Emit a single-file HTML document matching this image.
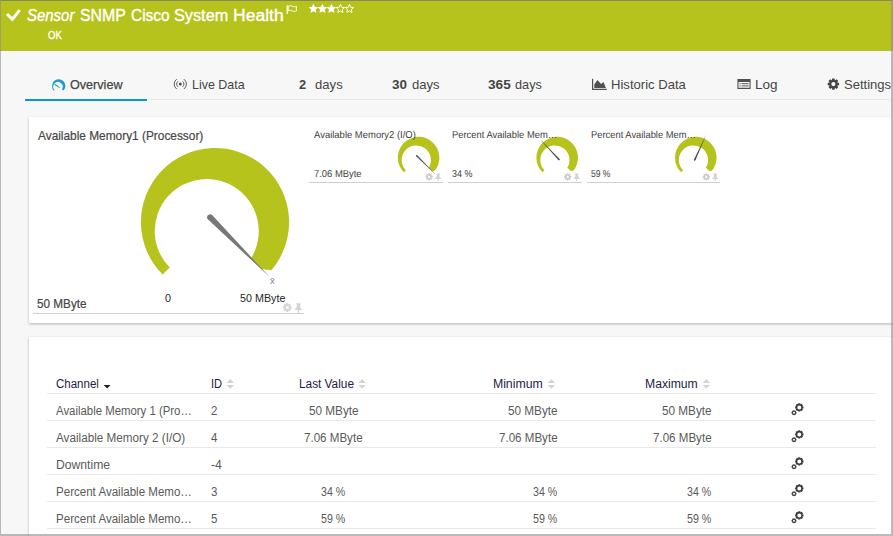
<!DOCTYPE html>
<html lang="en"><head><meta charset="utf-8"><title>Sensor SNMP Cisco System Health</title>
<style>
html,body{margin:0;padding:0}
body{width:893px;height:536px;overflow:hidden;background:#f7f7f7;font-family:"Liberation Sans",sans-serif;position:relative}
#frame{position:absolute;left:0;top:0;width:893px;height:536px;box-sizing:border-box;border-style:solid;border-color:rgba(118,118,118,.75) rgba(140,140,140,.6) rgba(140,140,140,.6) rgba(140,140,140,.6);border-width:1px 2px 2px 1px;z-index:10;pointer-events:none}
header{position:absolute;left:0;top:0;width:893px;height:51px;background:#b6c31c}
nav{position:absolute;left:0;top:51px;width:893px;height:49px}
nav .line{position:absolute;left:25px;top:48px;width:868px;height:1px;background:#e9e9e9}
nav .active{position:absolute;left:25px;top:48px;width:122px;height:2px;background:#0a97d9}
.card{position:absolute;background:#fff;box-shadow:0 1px 2.5px rgba(0,0,0,.28)}
#c1{left:29px;top:117px;width:880px;height:206px}
#c2{left:29px;top:337px;width:880px;height:220px}
.hl{position:absolute;height:1px;background:#cfcfcf}
.rl{position:absolute;left:47px;width:829px;height:1px;background:#e9e9e9}
.t{position:absolute;white-space:pre;line-height:20px;height:20px;transform-origin:0 0}
svg{position:absolute;left:0;top:0}
</style></head>
<body>
<header></header>
<nav><div class="line"></div><div class="active"></div></nav>
<section class="card" id="c1"></section>
<section class="card" id="c2"></section>
<div class="hl" style="left:33px;top:313px;width:271px"></div><div class="hl" style="left:309px;top:182px;width:134px"></div><div class="hl" style="left:448px;top:182px;width:133.5px"></div><div class="hl" style="left:586.5px;top:182px;width:133.5px"></div><div class="rl" style="top:393px"></div><div class="rl" style="top:420px"></div><div class="rl" style="top:447px"></div><div class="rl" style="top:474px"></div><div class="rl" style="top:501px"></div><div class="rl" style="top:528px"></div>
<svg width="893" height="536" viewBox="0 0 893 536">
<path d="M5.9 14.9L8.0 12.9L12.2 16.9L18.6 9.2L20.8 11.0L12.5 21.4Z" fill="#fff"/>
<path d="M287.2 5.2v8.8" stroke="#fff" stroke-width="1.2" fill="none"/>
<path d="M288.2 6.3c1.6 -0.8 2.8 -0.6 4.2 0c1.4 0.6 2.6 0.6 4 0v4.6c-1.4 0.6 -2.6 0.6 -4 0c-1.4 -0.6 -2.6 -0.8 -4.2 0z" stroke="#fff" stroke-width="1" fill="none"/>
<polygon points="313.40,3.70 314.81,6.86 318.25,7.22 315.68,9.54 316.40,12.93 313.40,11.20 310.40,12.93 311.12,9.54 308.55,7.22 311.99,6.86" fill="#fff"/>
<polygon points="322.40,3.70 323.81,6.86 327.25,7.22 324.68,9.54 325.40,12.93 322.40,11.20 319.40,12.93 320.12,9.54 317.55,7.22 320.99,6.86" fill="#fff"/>
<polygon points="331.40,3.70 332.81,6.86 336.25,7.22 333.68,9.54 334.40,12.93 331.40,11.20 328.40,12.93 329.12,9.54 326.55,7.22 329.99,6.86" fill="#fff"/>
<polygon points="340.40,4.50 341.58,7.28 344.58,7.54 342.30,9.52 342.99,12.46 340.40,10.90 337.81,12.46 338.50,9.52 336.22,7.54 339.22,7.28" fill="none" stroke="#fff" stroke-width="0.9"/>
<polygon points="349.40,4.50 350.58,7.28 353.58,7.54 351.30,9.52 351.99,12.46 349.40,10.90 346.81,12.46 347.50,9.52 345.22,7.54 348.22,7.28" fill="none" stroke="#fff" stroke-width="0.9"/>
<path transform="translate(58.7 85.9) scale(0.09041835357624832) translate(-215 -222.1)" d="M162.60 274.50A74.1 74.1 0 1 1 271.43 270.13L261.9 269.0L251.1 258.2A52.0 52.0 0 1 0 169.73 267.57Z" fill="#1e9bd7"/>
<path d="M59.6 87.6L54.8 84.3" stroke="#1e9bd7" stroke-width="1.1"/>
<circle cx="180.3" cy="84.1" r="1.5" fill="#505050"/>
<path d="M182.61 81.34A3.6 3.6 0 0 1 182.61 86.86M177.99 81.34A3.6 3.6 0 0 0 177.99 86.86" stroke="#5c5c5c" stroke-width="1.0" fill="none"/>
<path d="M183.89 79.16A6.1 6.1 0 0 1 183.89 89.04M176.71 79.16A6.1 6.1 0 0 0 176.71 89.04" stroke="#5c5c5c" stroke-width="1.0" fill="none"/>
<path d="M592 78.8h1.2v10h13.6v1.1h-14.8z" fill="#505050"/>
<path d="M594.3 88v-3.6l3.1 -4.5l3.7 4.2l2.4 -2.1l2.4 6z" fill="#505050"/>
<path d="M737.4 79.1h13.2v9.8h-13.2zM738.5 81.9v5.9h11v-5.9z" fill="#505050" fill-rule="evenodd"/>
<path d="M739.5 83h1.2v1.3h-1.2zM741.6 83h7v1.3h-7zM739.5 85.2h1.2v1.3h-1.2zM741.6 85.2h7v1.3h-7z" fill="#7a7a7a"/>
<path d="M837.48 82.73L839.07 82.86L839.07 85.34L837.48 85.47L837.25 86.01L838.28 87.23L836.53 88.98L835.31 87.95L834.77 88.18L834.64 89.77L832.16 89.77L832.03 88.18L831.49 87.95L830.27 88.98L828.52 87.23L829.55 86.01L829.32 85.47L827.73 85.34L827.73 82.86L829.32 82.73L829.55 82.19L828.52 80.97L830.27 79.22L831.49 80.25L832.03 80.02L832.16 78.43L834.64 78.43L834.77 80.02L835.31 80.25L836.53 79.22L838.28 80.97L837.25 82.19ZM835.50 84.10A2.1 2.1 0 1 0 831.30 84.10A2.1 2.1 0 1 0 835.50 84.10Z" fill="#444" fill-rule="evenodd"/>
<path d="M162.60 274.50A74.1 74.1 0 1 1 271.43 270.13L261.9 269.0L251.1 258.2A52.0 52.0 0 1 0 169.73 267.57Z" fill="#b6c31c"/>
<path d="M208.10 219.53L270.16 277.55L270.16 277.55L212.35 215.29A3.0 3.0 0 0 0 208.10 219.53Z" fill="#777777"/>
<text x="270.0" y="283.8" font-family="Liberation Sans, sans-serif" font-size="9.5" fill="#7d838f">x̄</text>
<path d="M290.43 306.45L291.70 306.54L291.70 308.46L290.43 308.55L290.25 308.97L291.09 309.93L289.73 311.29L288.77 310.45L288.35 310.63L288.26 311.90L286.34 311.90L286.25 310.63L285.83 310.45L284.87 311.29L283.51 309.93L284.35 308.97L284.17 308.55L282.90 308.46L282.90 306.54L284.17 306.45L284.35 306.03L283.51 305.07L284.87 303.71L285.83 304.55L286.25 304.37L286.34 303.10L288.26 303.10L288.35 304.37L288.77 304.55L289.73 303.71L291.09 305.07L290.25 306.03ZM288.90 307.50A1.6 1.6 0 1 0 285.70 307.50A1.6 1.6 0 1 0 288.90 307.50Z" fill="#d3d3d3" fill-rule="evenodd"/>
<path fill="#d3d3d3" d="M296.2 303.3h4.6v1.1h-0.6v3.1l1.8 1.6v1h-2.8v2.3l-0.7 0.9l-0.7 -0.9v-2.3h-2.8v-1l1.8 -1.6v-3.1h-0.6z"/>
<path transform="translate(418.6 157.6) scale(0.28070175438596495) translate(-215 -222.1)" d="M162.60 274.50A74.1 74.1 0 1 1 271.43 270.13L261.9 269.0L251.1 258.2A52.0 52.0 0 1 0 169.73 267.57Z" fill="#b6c31c"/>
<path d="M416.16 156.36L434.90 174.11L435.11 173.90L417.36 155.16A0.85 0.85 0 0 0 416.16 156.36Z" fill="#4d4d4d"/>
<path d="M431.66 176.04L432.71 176.11L432.71 177.69L431.66 177.76L431.52 178.10L432.22 178.89L431.09 180.02L430.30 179.32L429.96 179.46L429.89 180.51L428.31 180.51L428.24 179.46L427.90 179.32L427.11 180.02L425.98 178.89L426.68 178.10L426.54 177.76L425.49 177.69L425.49 176.11L426.54 176.04L426.68 175.70L425.98 174.91L427.11 173.78L427.90 174.48L428.24 174.34L428.31 173.29L429.89 173.29L429.96 174.34L430.30 174.48L431.09 173.78L432.22 174.91L431.52 175.70ZM430.20 176.90A1.1 1.1 0 1 0 428.00 176.90A1.1 1.1 0 1 0 430.20 176.90Z" fill="#cdcdcd" fill-rule="evenodd"/>
<path transform="translate(435.30 173.5) scale(0.8) translate(-435.30 -173.5)" fill="#d3d3d3" d="M436.5 173.5h4.6v1.1h-0.6v3.1l1.8 1.6v1h-2.8v2.3l-0.7 0.9l-0.7 -0.9v-2.3h-2.8v-1l1.8 -1.6v-3.1h-0.6z"/>
<path transform="translate(557.2 157.6) scale(0.28070175438596495) translate(-215 -222.1)" d="M162.60 274.50A74.1 74.1 0 1 1 271.43 270.13L261.9 269.0L251.1 258.2A52.0 52.0 0 1 0 169.73 267.57Z" fill="#b6c31c"/>
<path d="M559.60 158.91L541.43 140.59L541.21 140.79L558.36 160.08A0.85 0.85 0 0 0 559.60 158.91Z" fill="#4d4d4d"/>
<path d="M570.26 176.04L571.31 176.11L571.31 177.69L570.26 177.76L570.12 178.10L570.82 178.89L569.69 180.02L568.90 179.32L568.56 179.46L568.49 180.51L566.91 180.51L566.84 179.46L566.50 179.32L565.71 180.02L564.58 178.89L565.28 178.10L565.14 177.76L564.09 177.69L564.09 176.11L565.14 176.04L565.28 175.70L564.58 174.91L565.71 173.78L566.50 174.48L566.84 174.34L566.91 173.29L568.49 173.29L568.56 174.34L568.90 174.48L569.69 173.78L570.82 174.91L570.12 175.70ZM568.80 176.90A1.1 1.1 0 1 0 566.60 176.90A1.1 1.1 0 1 0 568.80 176.90Z" fill="#cdcdcd" fill-rule="evenodd"/>
<path transform="translate(573.90 173.5) scale(0.8) translate(-573.90 -173.5)" fill="#d3d3d3" d="M575.1000000000001 173.5h4.6v1.1h-0.6v3.1l1.8 1.6v1h-2.8v2.3l-0.7 0.9l-0.7 -0.9v-2.3h-2.8v-1l1.8 -1.6v-3.1h-0.6z"/>
<path transform="translate(695.8 157.6) scale(0.28070175438596495) translate(-215 -222.1)" d="M162.60 274.50A74.1 74.1 0 1 1 271.43 270.13L261.9 269.0L251.1 258.2A52.0 52.0 0 1 0 169.73 267.57Z" fill="#b6c31c"/>
<path d="M695.50 160.32L705.48 136.52L705.21 136.39L693.96 159.62A0.85 0.85 0 0 0 695.50 160.32Z" fill="#4d4d4d"/>
<path d="M708.86 176.04L709.91 176.11L709.91 177.69L708.86 177.76L708.72 178.10L709.42 178.89L708.29 180.02L707.50 179.32L707.16 179.46L707.09 180.51L705.51 180.51L705.44 179.46L705.10 179.32L704.31 180.02L703.18 178.89L703.88 178.10L703.74 177.76L702.69 177.69L702.69 176.11L703.74 176.04L703.88 175.70L703.18 174.91L704.31 173.78L705.10 174.48L705.44 174.34L705.51 173.29L707.09 173.29L707.16 174.34L707.50 174.48L708.29 173.78L709.42 174.91L708.72 175.70ZM707.40 176.90A1.1 1.1 0 1 0 705.20 176.90A1.1 1.1 0 1 0 707.40 176.90Z" fill="#cdcdcd" fill-rule="evenodd"/>
<path transform="translate(712.50 173.5) scale(0.8) translate(-712.50 -173.5)" fill="#d3d3d3" d="M713.7 173.5h4.6v1.1h-0.6v3.1l1.8 1.6v1h-2.8v2.3l-0.7 0.9l-0.7 -0.9v-2.3h-2.8v-1l1.8 -1.6v-3.1h-0.6z"/>
<path d="M103.6 385l3.5 3.4l3.5 -3.4z" fill="#222"/>
<path fill="#d4d4d4" d="M226.5 382.9l3.8 -3.9l3.8 3.9zM226.5 384.9l3.8 3.9l3.8 -3.9z"/>
<path fill="#d4d4d4" d="M358.3 382.9l3.8 -3.9l3.8 3.9zM358.3 384.9l3.8 3.9l3.8 -3.9z"/>
<path fill="#d4d4d4" d="M547.6 382.9l3.8 -3.9l3.8 3.9zM547.6 384.9l3.8 3.9l3.8 -3.9z"/>
<path fill="#d4d4d4" d="M702.6 382.9l3.8 -3.9l3.8 3.9zM702.6 384.9l3.8 3.9l3.8 -3.9z"/>
<path d="M802.49 406.22L803.48 406.40L803.48 408.40L802.49 408.58L802.39 408.82L802.97 409.65L801.55 411.07L800.72 410.49L800.48 410.59L800.30 411.58L798.30 411.58L798.12 410.59L797.88 410.49L797.05 411.07L795.63 409.65L796.21 408.82L796.11 408.58L795.12 408.40L795.12 406.40L796.11 406.22L796.21 405.98L795.63 405.15L797.05 403.73L797.88 404.31L798.12 404.21L798.30 403.22L800.30 403.22L800.48 404.21L800.72 404.31L801.55 403.73L802.97 405.15L802.39 405.98ZM801.30 407.40A2.0 2.0 0 1 0 797.30 407.40A2.0 2.0 0 1 0 801.30 407.40Z" fill="#3a3a3a" fill-rule="evenodd"/>
<path d="M795.78 411.79L796.47 411.90L796.47 413.50L795.78 413.61L795.68 413.79L795.93 414.44L794.54 415.24L794.10 414.70L793.90 414.70L793.46 415.24L792.07 414.44L792.32 413.79L792.22 413.61L791.53 413.50L791.53 411.90L792.22 411.79L792.32 411.61L792.07 410.96L793.46 410.16L793.90 410.70L794.10 410.70L794.54 410.16L795.93 410.96L795.68 411.61ZM795.00 412.70A1.0 1.0 0 1 0 793.00 412.70A1.0 1.0 0 1 0 795.00 412.70Z" fill="#3a3a3a" fill-rule="evenodd"/>
<path d="M802.49 433.22L803.48 433.40L803.48 435.40L802.49 435.58L802.39 435.82L802.97 436.65L801.55 438.07L800.72 437.49L800.48 437.59L800.30 438.58L798.30 438.58L798.12 437.59L797.88 437.49L797.05 438.07L795.63 436.65L796.21 435.82L796.11 435.58L795.12 435.40L795.12 433.40L796.11 433.22L796.21 432.98L795.63 432.15L797.05 430.73L797.88 431.31L798.12 431.21L798.30 430.22L800.30 430.22L800.48 431.21L800.72 431.31L801.55 430.73L802.97 432.15L802.39 432.98ZM801.30 434.40A2.0 2.0 0 1 0 797.30 434.40A2.0 2.0 0 1 0 801.30 434.40Z" fill="#3a3a3a" fill-rule="evenodd"/>
<path d="M795.78 438.79L796.47 438.90L796.47 440.50L795.78 440.61L795.68 440.79L795.93 441.44L794.54 442.24L794.10 441.70L793.90 441.70L793.46 442.24L792.07 441.44L792.32 440.79L792.22 440.61L791.53 440.50L791.53 438.90L792.22 438.79L792.32 438.61L792.07 437.96L793.46 437.16L793.90 437.70L794.10 437.70L794.54 437.16L795.93 437.96L795.68 438.61ZM795.00 439.70A1.0 1.0 0 1 0 793.00 439.70A1.0 1.0 0 1 0 795.00 439.70Z" fill="#3a3a3a" fill-rule="evenodd"/>
<path d="M802.49 460.22L803.48 460.40L803.48 462.40L802.49 462.58L802.39 462.82L802.97 463.65L801.55 465.07L800.72 464.49L800.48 464.59L800.30 465.58L798.30 465.58L798.12 464.59L797.88 464.49L797.05 465.07L795.63 463.65L796.21 462.82L796.11 462.58L795.12 462.40L795.12 460.40L796.11 460.22L796.21 459.98L795.63 459.15L797.05 457.73L797.88 458.31L798.12 458.21L798.30 457.22L800.30 457.22L800.48 458.21L800.72 458.31L801.55 457.73L802.97 459.15L802.39 459.98ZM801.30 461.40A2.0 2.0 0 1 0 797.30 461.40A2.0 2.0 0 1 0 801.30 461.40Z" fill="#3a3a3a" fill-rule="evenodd"/>
<path d="M795.78 465.79L796.47 465.90L796.47 467.50L795.78 467.61L795.68 467.79L795.93 468.44L794.54 469.24L794.10 468.70L793.90 468.70L793.46 469.24L792.07 468.44L792.32 467.79L792.22 467.61L791.53 467.50L791.53 465.90L792.22 465.79L792.32 465.61L792.07 464.96L793.46 464.16L793.90 464.70L794.10 464.70L794.54 464.16L795.93 464.96L795.68 465.61ZM795.00 466.70A1.0 1.0 0 1 0 793.00 466.70A1.0 1.0 0 1 0 795.00 466.70Z" fill="#3a3a3a" fill-rule="evenodd"/>
<path d="M802.49 487.22L803.48 487.40L803.48 489.40L802.49 489.58L802.39 489.82L802.97 490.65L801.55 492.07L800.72 491.49L800.48 491.59L800.30 492.58L798.30 492.58L798.12 491.59L797.88 491.49L797.05 492.07L795.63 490.65L796.21 489.82L796.11 489.58L795.12 489.40L795.12 487.40L796.11 487.22L796.21 486.98L795.63 486.15L797.05 484.73L797.88 485.31L798.12 485.21L798.30 484.22L800.30 484.22L800.48 485.21L800.72 485.31L801.55 484.73L802.97 486.15L802.39 486.98ZM801.30 488.40A2.0 2.0 0 1 0 797.30 488.40A2.0 2.0 0 1 0 801.30 488.40Z" fill="#3a3a3a" fill-rule="evenodd"/>
<path d="M795.78 492.79L796.47 492.90L796.47 494.50L795.78 494.61L795.68 494.79L795.93 495.44L794.54 496.24L794.10 495.70L793.90 495.70L793.46 496.24L792.07 495.44L792.32 494.79L792.22 494.61L791.53 494.50L791.53 492.90L792.22 492.79L792.32 492.61L792.07 491.96L793.46 491.16L793.90 491.70L794.10 491.70L794.54 491.16L795.93 491.96L795.68 492.61ZM795.00 493.70A1.0 1.0 0 1 0 793.00 493.70A1.0 1.0 0 1 0 795.00 493.70Z" fill="#3a3a3a" fill-rule="evenodd"/>
<path d="M802.49 514.22L803.48 514.40L803.48 516.40L802.49 516.58L802.39 516.82L802.97 517.65L801.55 519.07L800.72 518.49L800.48 518.59L800.30 519.58L798.30 519.58L798.12 518.59L797.88 518.49L797.05 519.07L795.63 517.65L796.21 516.82L796.11 516.58L795.12 516.40L795.12 514.40L796.11 514.22L796.21 513.98L795.63 513.15L797.05 511.73L797.88 512.31L798.12 512.21L798.30 511.22L800.30 511.22L800.48 512.21L800.72 512.31L801.55 511.73L802.97 513.15L802.39 513.98ZM801.30 515.40A2.0 2.0 0 1 0 797.30 515.40A2.0 2.0 0 1 0 801.30 515.40Z" fill="#3a3a3a" fill-rule="evenodd"/>
<path d="M795.78 519.79L796.47 519.90L796.47 521.50L795.78 521.61L795.68 521.79L795.93 522.44L794.54 523.24L794.10 522.70L793.90 522.70L793.46 523.24L792.07 522.44L792.32 521.79L792.22 521.61L791.53 521.50L791.53 519.90L792.22 519.79L792.32 519.61L792.07 518.96L793.46 518.16L793.90 518.70L794.10 518.70L794.54 518.16L795.93 518.96L795.68 519.61ZM795.00 520.70A1.0 1.0 0 1 0 793.00 520.70A1.0 1.0 0 1 0 795.00 520.70Z" fill="#3a3a3a" fill-rule="evenodd"/>
</svg>
<div class="grp" id="title"><span class="t" style="left:27.08px;top:6px;font-size:16px;color:#ffffff;transform:scaleX(0.9350);font-style:italic;-webkit-text-stroke:0.35px #fff;">Sensor</span>
<span class="t" style="left:80.20px;top:6px;font-size:16px;color:#ffffff;transform:scaleX(0.9908);-webkit-text-stroke:0.35px #fff;">SNMP</span>
<span class="t" style="left:130.88px;top:6px;font-size:16px;color:#ffffff;transform:scaleX(0.9642);-webkit-text-stroke:0.35px #fff;">Cisco</span>
<span class="t" style="left:173.98px;top:6px;font-size:16px;color:#ffffff;transform:scaleX(1.0165);-webkit-text-stroke:0.35px #fff;">System</span>
<span class="t" style="left:232.90px;top:6px;font-size:16px;color:#ffffff;transform:scaleX(1.0976);-webkit-text-stroke:0.35px #fff;">Health</span>
<span class="t" style="left:47.80px;top:26px;font-size:10.4px;color:#ffffff;transform:scaleX(0.9220);-webkit-text-stroke:0.3px #fff;">OK</span></div>
<div class="grp" id="tabs"><span class="t" style="left:69.74px;top:75px;font-size:13.4px;color:#454545;transform:scaleX(0.9405);-webkit-text-stroke:0.25px #454545;">Overview</span>
<span class="t" style="left:191.87px;top:75px;font-size:13.4px;color:#464646;transform:scaleX(0.9320);">Live Data</span>
<span class="t" style="left:299.07px;top:75px;font-size:13.4px;color:#464646;transform:scaleX(0.9600);font-weight:700;">2</span>
<span class="t" style="left:314.50px;top:75px;font-size:13.4px;color:#464646;transform:scaleX(0.9789);">days</span>
<span class="t" style="left:392.30px;top:75px;font-size:13.4px;color:#464646;transform:scaleX(1.0076);font-weight:700;">30</span>
<span class="t" style="left:411.80px;top:75px;font-size:13.4px;color:#464646;transform:scaleX(0.9753);">days</span>
<span class="t" style="left:487.90px;top:75px;font-size:13.4px;color:#464646;transform:scaleX(1.0163);font-weight:700;">365</span>
<span class="t" style="left:514.71px;top:75px;font-size:13.4px;color:#464646;transform:scaleX(0.9497);">days</span>
<span class="t" style="left:611.42px;top:75px;font-size:13.4px;color:#464646;transform:scaleX(0.9764);">Historic Data</span>
<span class="t" style="left:754.99px;top:75px;font-size:13.4px;color:#464646;transform:scaleX(1.0091);">Log</span>
<span class="t" style="left:843.91px;top:75px;font-size:13.4px;color:#464646;transform:scaleX(0.9727);">Settings</span></div>
<div class="grp" id="gauge-main"><span class="t" style="left:37.89px;top:126px;font-size:12.4px;color:#474747;transform:scaleX(0.9577);-webkit-text-stroke:0.2px #474747;">Available Memory1 (Processor)</span>
<span class="t" style="left:37.44px;top:294px;font-size:12.4px;color:#474747;transform:scaleX(0.9481);-webkit-text-stroke:0.2px #474747;">50 MByte</span>
<span class="t" style="left:164.82px;top:288px;font-size:11.2px;color:#262626;transform:scaleX(0.9600);">0</span>
<span class="t" style="left:239.83px;top:288px;font-size:11.2px;color:#262626;transform:scaleX(0.9623);">50 MByte</span></div>
<div class="grp" id="gauge-small"><span class="t" style="left:313.84px;top:126px;font-size:10px;color:#3e3e3e;transform:scaleX(0.9466);text-rendering:geometricPrecision;">Available Memory2 (I/O)</span>
<span class="t" style="left:452.02px;top:126px;font-size:10px;color:#3e3e3e;transform:scaleX(0.9383);text-rendering:geometricPrecision;">Percent Available Mem…</span>
<span class="t" style="left:590.92px;top:126px;font-size:10px;color:#3e3e3e;transform:scaleX(0.9356);text-rendering:geometricPrecision;">Percent Available Mem…</span>
<span class="t" style="left:313.83px;top:165px;font-size:10px;color:#3e3e3e;transform:scaleX(0.9411);text-rendering:geometricPrecision;">7.06 MByte</span>
<span class="t" style="left:452.19px;top:165px;font-size:10px;color:#3e3e3e;transform:scaleX(0.8938);text-rendering:geometricPrecision;">34 %</span>
<span class="t" style="left:591.09px;top:165px;font-size:10px;color:#3e3e3e;transform:scaleX(0.8542);text-rendering:geometricPrecision;">59 %</span></div>
<div class="grp" id="channels-head"><span class="t" style="left:55.57px;top:374px;font-size:12.3px;color:#251c48;transform:scaleX(0.9351);">Channel</span>
<span class="t" style="left:210.74px;top:374px;font-size:12.3px;color:#251c48;transform:scaleX(0.9064);">ID</span>
<span class="t" style="left:298.84px;top:374px;font-size:12.3px;color:#251c48;transform:scaleX(0.9607);">Last Value</span>
<span class="t" style="left:492.90px;top:374px;font-size:12.3px;color:#251c48;">Minimum</span>
<span class="t" style="left:645.11px;top:374px;font-size:12.3px;color:#251c48;transform:scaleX(0.9892);">Maximum</span></div>
<div class="grp" id="channels-body"><span class="t" style="left:55.89px;top:401px;font-size:12px;color:#5a5a5a;transform:scaleX(0.9488);">Available Memory 1 (Pro…</span>
<span class="t" style="left:210.78px;top:401px;font-size:12px;color:#5a5a5a;transform:scaleX(0.9600);">2</span>
<span class="t" style="left:308.56px;top:401px;font-size:12px;color:#5a5a5a;transform:scaleX(0.9785);">50 MByte</span>
<span class="t" style="left:507.76px;top:401px;font-size:12px;color:#5a5a5a;transform:scaleX(0.9785);">50 MByte</span>
<span class="t" style="left:662.36px;top:401px;font-size:12px;color:#5a5a5a;transform:scaleX(0.9785);">50 MByte</span>
<span class="t" style="left:55.88px;top:428px;font-size:12px;color:#5a5a5a;transform:scaleX(0.9751);">Available Memory 2 (I/O)</span>
<span class="t" style="left:211.16px;top:428px;font-size:12px;color:#5a5a5a;transform:scaleX(0.9600);">4</span>
<span class="t" style="left:304.15px;top:428px;font-size:12px;color:#5a5a5a;transform:scaleX(0.9649);">7.06 MByte</span>
<span class="t" style="left:498.80px;top:428px;font-size:12px;color:#5a5a5a;transform:scaleX(0.9649);">7.06 MByte</span>
<span class="t" style="left:653.40px;top:428px;font-size:12px;color:#5a5a5a;transform:scaleX(0.9649);">7.06 MByte</span>
<span class="t" style="left:55.79px;top:455px;font-size:12px;color:#5a5a5a;transform:scaleX(1.0135);">Downtime</span>
<span class="t" style="left:210.51px;top:455px;font-size:12px;color:#5a5a5a;transform:scaleX(1.0228);">-4</span>
<span class="t" style="left:55.84px;top:482px;font-size:12px;color:#5a5a5a;transform:scaleX(0.9627);">Percent Available Memo…</span>
<span class="t" style="left:210.73px;top:482px;font-size:12px;color:#5a5a5a;transform:scaleX(0.9600);">3</span>
<span class="t" style="left:321.17px;top:482px;font-size:12px;color:#5a5a5a;transform:scaleX(0.8872);">34 %</span>
<span class="t" style="left:532.87px;top:482px;font-size:12px;color:#5a5a5a;transform:scaleX(0.8872);">34 %</span>
<span class="t" style="left:687.47px;top:482px;font-size:12px;color:#5a5a5a;transform:scaleX(0.8872);">34 %</span>
<span class="t" style="left:55.84px;top:509px;font-size:12px;color:#5a5a5a;transform:scaleX(0.9627);">Percent Available Memo…</span>
<span class="t" style="left:210.67px;top:509px;font-size:12px;color:#5a5a5a;transform:scaleX(0.9600);">5</span>
<span class="t" style="left:321.12px;top:509px;font-size:12px;color:#5a5a5a;transform:scaleX(0.8892);">59 %</span>
<span class="t" style="left:532.82px;top:509px;font-size:12px;color:#5a5a5a;transform:scaleX(0.8892);">59 %</span>
<span class="t" style="left:687.42px;top:509px;font-size:12px;color:#5a5a5a;transform:scaleX(0.8892);">59 %</span></div>
<div id="frame"></div>
</body></html>
